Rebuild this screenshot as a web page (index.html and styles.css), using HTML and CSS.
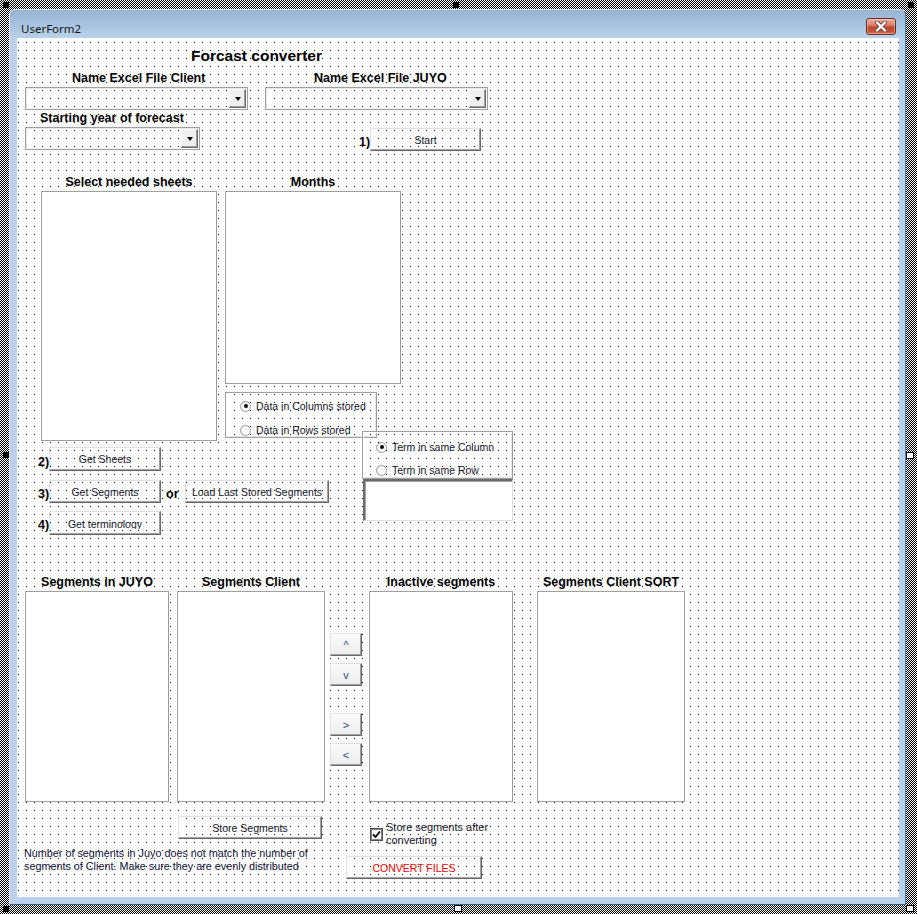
FILE: index.html
```html
<!DOCTYPE html>
<html>
<head>
<meta charset="utf-8">
<title>UserForm2</title>
<link rel="stylesheet" href="styles.css">
</head>
<body>
<div class="screen">
  <div class="window">
    <div class="titlebar">
      <span class="title">UserForm2</span>
      <div class="close">
        <svg width="16" height="11" viewBox="0 0 16 11">
          <path d="M4 1.5 L12 9.5 M12 1.5 L4 9.5" stroke="#7a4a44" stroke-width="4.2" stroke-linecap="round" fill="none"/>
          <path d="M4 1.5 L12 9.5 M12 1.5 L4 9.5" stroke="#ffffff" stroke-width="2.4" stroke-linecap="round" fill="none"/>
        </svg>
      </div>
    </div>
    <div class="client-wrap">
      <div class="canvas">
        <div class="ctl heading">Forcast converter</div>

        <div class="ctl lbl-b" style="left:55px;top:32px">Name Excel File Client</div>
        <div class="ctl combo" style="left:8px;top:49px;width:223px"><span class="drop"><i></i></span></div>

        <div class="ctl lbl-b" style="left:297px;top:32px">Name Excel File JUYO</div>
        <div class="ctl combo" style="left:248px;top:49px;width:223px"><span class="drop"><i></i></span></div>

        <div class="ctl lbl-b" style="left:23px;top:72px">Starting year of forecast</div>
        <div class="ctl combo" style="left:8px;top:89px;width:175px"><span class="drop"><i></i></span></div>

        <div class="ctl lbl-b" style="left:342px;top:96px">1)</div>
        <div class="ctl btn" style="left:353px;top:90px;width:111px;height:23px">Start</div>

        <div class="ctl group" style="left:24px;top:136px;width:176px">
          <div class="lbl-b">Select needed sheets</div>
          <div class="list" style="height:250px"></div>
        </div>
        <div class="ctl group" style="left:208px;top:136px;width:176px">
          <div class="lbl-b">Months</div>
          <div class="list" style="height:193px"></div>
        </div>

        <div class="ctl frame frame1">
          <div class="opt"><span class="radio on"></span>Data in Columns stored</div>
          <div class="opt"><span class="radio"></span>Data in Rows stored</div>
        </div>
        <div class="ctl frame frame2">
          <div class="opt"><span class="radio on"></span>Term in same Column</div>
          <div class="opt"><span class="radio"></span>Term in same Row</div>
        </div>
        <div class="ctl textbox"></div>

        <div class="ctl lbl-b" style="left:21px;top:416px">2)</div>
        <div class="ctl btn" style="left:32px;top:409px;width:112px;height:24px">Get Sheets</div>
        <div class="ctl lbl-b" style="left:21px;top:448px">3)</div>
        <div class="ctl btn" style="left:32px;top:442px;width:112px;height:23px">Get Segments</div>
        <div class="ctl lbl-b" style="left:149px;top:448px">or</div>
        <div class="ctl btn" style="left:168px;top:442px;width:144px;height:23px">Load Last Stored Segments</div>
        <div class="ctl lbl-b" style="left:21px;top:479px">4)</div>
        <div class="ctl btn clip" style="left:32px;top:473px;width:112px;height:24px"><span class="cut">Get terminology</span></div>

        <div class="ctl group" style="left:8px;top:536px;width:144px">
          <div class="lbl-b">Segments in JUYO</div>
          <div class="list seg"></div>
        </div>
        <div class="ctl group" style="left:160px;top:536px;width:148px">
          <div class="lbl-b">Segments Client</div>
          <div class="list seg"></div>
        </div>
        <div class="ctl group" style="left:352px;top:536px;width:144px">
          <div class="lbl-b">Inactive segments</div>
          <div class="list seg"></div>
        </div>
        <div class="ctl group" style="left:520px;top:536px;width:148px">
          <div class="lbl-b">Segments Client SORT</div>
          <div class="list seg"></div>
        </div>

        <div class="ctl arrows">
          <div class="btn abtn">^</div>
          <div class="btn abtn">v</div>
          <div class="btn abtn gap">&gt;</div>
          <div class="btn abtn">&lt;</div>
        </div>

        <div class="ctl btn" style="left:161px;top:778px;width:144px;height:23px">Store Segments</div>

        <div class="ctl check-row">
          <span class="checkbox">
            <svg width="9" height="9" viewBox="0 0 9 9"><path d="M1 4.5 L3.5 7 L8 1.5" stroke="#000" stroke-width="1.8" fill="none"/></svg>
          </span>
          <span class="check-text">Store segments after<br>converting</span>
        </div>

        <div class="ctl message">Number of segments in Juyo does not match the number of<br>segments of Client. Make sure they are evenly distributed</div>

        <div class="ctl btn convert" style="left:329px;top:818px;width:136px;height:23px">CONVERT FILES</div>
      </div>
    </div>
  </div>

  <span class="handle dark" style="left:3px;top:2px"></span>
  <span class="handle dark" style="left:453px;top:2px"></span>
  <span class="handle dark" style="left:908px;top:2px"></span>
  <span class="handle dark" style="left:3px;top:452px"></span>
  <span class="handle light" style="left:906px;top:452px"></span>
  <span class="handle dark" style="left:3px;top:906px"></span>
  <span class="handle light" style="left:454px;top:905px"></span>
  <span class="handle light" style="left:906px;top:905px"></span>
</div>
</body>
</html>
```

FILE: styles.css
```css
html, body {
  margin: 0;
  padding: 0;
}

body {
  width: 917px;
  height: 914px;
  overflow: hidden;
  font-family: "Liberation Sans", Arial, sans-serif;
}

.screen {
  position: relative;
  width: 917px;
  height: 914px;
  box-sizing: border-box;
  padding: 9px 0 0 9px;
  background: repeating-conic-gradient(#000 0 25%, #fff 0 50%) 0 0 / 2px 2px;
}

.window {
  width: 897px;
  height: 896px;
  box-sizing: border-box;
  display: flex;
  flex-direction: column;
  border-radius: 6px 6px 0 0;
  border-top: 1px solid #dde8f4;
  border-left: 1px solid #dde8f4;
  border-right: 1px solid #3f7fa6;
  border-bottom: 1px solid #2f6280;
  background: #b9d1ea;
  overflow: hidden;
}

.titlebar {
  height: 28px;
  flex: none;
  display: flex;
  align-items: flex-start;
  justify-content: space-between;
  padding: 0 9px 0 11px;
  background: linear-gradient(#97b3d2, #a9c4e0 55%, #b9d1ea);
}

.title {
  font-family: "Noto Sans", "Open Sans", sans-serif;
  font-size: 11.5px;
  line-height: 19px;
  margin-top: 9px;
  color: #151515;
}

.close {
  margin-top: 8px;
  width: 30px;
  height: 17px;
  box-sizing: border-box;
  border: 1px solid #6e2d22;
  border-radius: 3px;
  background: linear-gradient(#eab0a2, #d9806c 40%, #c2452f 55%, #c65437 85%, #d87a5a);
  box-shadow: inset 0 0 0 1px rgba(255, 235, 230, 0.35);
  display: flex;
  align-items: center;
  justify-content: center;
}

.client-wrap {
  flex: 1;
  padding: 0 6px 7px 7px;
  display: flex;
}

.canvas {
  position: relative;
  flex: 1;
  background:
    linear-gradient(to right, transparent 1px, #fff 1px) 1px 4px / 8px 8px,
    linear-gradient(to bottom, transparent 1px, #fff 1px) 1px 4px / 8px 8px,
    #000;
  color: #141428;
  font-size: 10.5px;
}

.ctl {
  position: absolute;
  box-sizing: border-box;
}

.heading {
  left: 174px;
  top: 8px;
  font-weight: bold;
  font-size: 15.5px;
  line-height: 20px;
  color: #000;
  white-space: nowrap;
}

.lbl-b {
  font-weight: bold;
  font-size: 12.5px;
  line-height: 16px;
  color: #000;
  white-space: nowrap;
}

.group {
  display: flex;
  flex-direction: column;
  align-items: center;
  gap: 1px;
}

.list {
  align-self: stretch;
  box-sizing: border-box;
  background: #fff;
  border: 1px solid #a0a0a0;
}

.list.seg {
  height: 211px;
}

.combo {
  height: 23px;
  border: 1px solid #a0a0a0;
  box-shadow: inset 1px 1px 0 #e8e8e8;
  display: flex;
  justify-content: flex-end;
  align-items: center;
  padding-right: 1px;
}

.drop {
  width: 17px;
  height: 19px;
  box-sizing: border-box;
  background: #f0f0f0;
  border-style: solid;
  border-width: 1px;
  border-color: #fff #696969 #696969 #fff;
  box-shadow: inset -1px -1px 0 #a0a0a0;
  display: flex;
  align-items: center;
  justify-content: center;
}

.drop i {
  width: 0;
  height: 0;
  border-left: 3.5px solid transparent;
  border-right: 3.5px solid transparent;
  border-top: 4px solid #000;
  margin-top: 1px;
}

.btn {
  border-style: solid;
  border-width: 1px;
  border-color: #e3e3e3 #696969 #696969 #e3e3e3;
  box-shadow: inset -1px -1px 0 #a0a0a0;
  display: flex;
  align-items: center;
  justify-content: center;
  white-space: nowrap;
  font-size: 10.5px;
  color: #141428;
  overflow: hidden;
}

.btn.clip {
  align-items: flex-start;
  padding-top: 6px;
}

.cut {
  display: block;
  height: 11px;
  line-height: 13px;
  overflow: hidden;
}

.convert {
  color: #ff0000;
}

.arrows {
  left: 313px;
  top: 595px;
  width: 32px;
  display: flex;
  flex-direction: column;
  gap: 7px;
}

.abtn {
  height: 23px;
  box-sizing: border-box;
  background: linear-gradient(#fbfbfb, #ececec);
  color: #2d4f8c;
  font-size: 11px;
}

.abtn.gap {
  margin-top: 20px;
}

.frame {
  border: 1px solid #a0a0a0;
  box-shadow: inset 1px 1px 0 #fff, inset -1px -1px 0 #e6e6e6;
  display: flex;
  flex-direction: column;
}

.frame1 {
  left: 208px;
  top: 354px;
  width: 152px;
  height: 46px;
  padding: 6px 0 0 14px;
  gap: 10px;
}

.frame2 {
  left: 345px;
  top: 393px;
  width: 151px;
  height: 48px;
  padding: 8px 0 0 13px;
  gap: 9px;
}

.opt {
  display: flex;
  align-items: center;
  gap: 5px;
  height: 14px;
  white-space: nowrap;
  font-size: 10.5px;
  color: #141428;
}

.radio {
  width: 11px;
  height: 11px;
  box-sizing: border-box;
  border-radius: 50%;
  border: 1px solid #9a9a9a;
  background: radial-gradient(circle at 60% 60%, #fff 40%, #dcdcdc);
  display: flex;
  align-items: center;
  justify-content: center;
}

.radio.on::after {
  content: "";
  width: 4px;
  height: 4px;
  border-radius: 50%;
  background: #000;
}

.textbox {
  left: 346px;
  top: 441px;
  width: 150px;
  height: 42px;
  background: #fff;
  border-style: solid;
  border-width: 2px 1px 1px 2px;
  border-color: #6d6d6d #e3e3e3 #e3e3e3 #6d6d6d;
  box-shadow: inset 1px 1px 0 #a0a0a0;
}

.check-row {
  left: 353px;
  top: 783px;
  display: flex;
  align-items: flex-start;
  gap: 3px;
}

.checkbox {
  margin-top: 7px;
  width: 13px;
  height: 13px;
  box-sizing: border-box;
  border: 1px solid #4d4d4d;
  box-shadow: inset 0 0 0 1px #8a8a8a;
  background: #fff;
  display: flex;
  align-items: center;
  justify-content: center;
}

.check-text {
  font-size: 11px;
  line-height: 13px;
  color: #141428;
  white-space: nowrap;
}

.message {
  left: 7px;
  top: 809px;
  font-size: 10.8px;
  line-height: 13px;
  color: #10103a;
  white-space: nowrap;
}

.handle {
  position: absolute;
  width: 6px;
  height: 6px;
  box-sizing: border-box;
}

.handle.dark {
  background: #000;
}

.handle.light {
  width: 8px;
  height: 7px;
  background: #fff;
  border: 1px solid #000;
}
```
